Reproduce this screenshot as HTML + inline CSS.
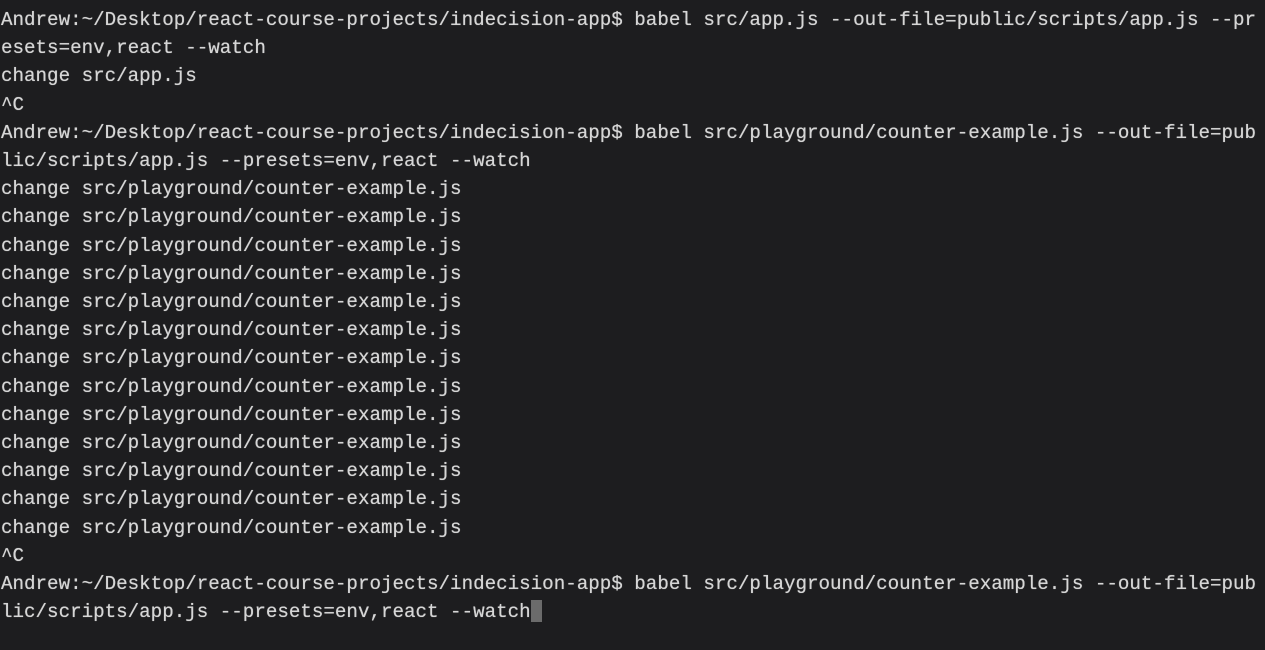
<!DOCTYPE html>
<html><head><style>
html,body{margin:0;padding:0;background:#1d1d1f;width:1265px;height:650px;overflow:hidden}
pre{margin:0;position:absolute;left:1px;top:6px;font-family:"Liberation Mono",monospace;font-size:19.2px;line-height:28.2px;color:#d6d6d6;white-space:pre;text-shadow:0 0 0.6px #d6d6d6}
.c{display:inline-block;width:11px;height:22px;background:#6b6b6b;vertical-align:-5px}
</style></head><body>
<pre>Andrew:~/Desktop/react-course-projects/indecision-app$ babel src/app.js --out-file=public/scripts/app.js --pr
esets=env,react --watch
change src/app.js
^C
Andrew:~/Desktop/react-course-projects/indecision-app$ babel src/playground/counter-example.js --out-file=pub
lic/scripts/app.js --presets=env,react --watch
change src/playground/counter-example.js
change src/playground/counter-example.js
change src/playground/counter-example.js
change src/playground/counter-example.js
change src/playground/counter-example.js
change src/playground/counter-example.js
change src/playground/counter-example.js
change src/playground/counter-example.js
change src/playground/counter-example.js
change src/playground/counter-example.js
change src/playground/counter-example.js
change src/playground/counter-example.js
change src/playground/counter-example.js
^C
Andrew:~/Desktop/react-course-projects/indecision-app$ babel src/playground/counter-example.js --out-file=pub
lic/scripts/app.js --presets=env,react --watch<span class="c"></span></pre>
</body></html>
